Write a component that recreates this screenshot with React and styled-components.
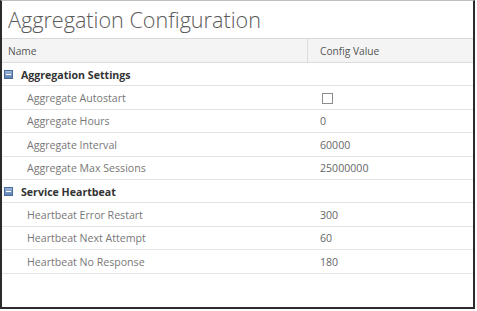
import React from 'react'
import styled, { createGlobalStyle } from 'styled-components'

const GlobalStyle = createGlobalStyle`
    html, body {
        margin: 0;
        padding: 0;
        background: #ffffff;
    }
    body {
        font-family: "Open Sans", "Liberation Sans", sans-serif;
    }
`;

const Frame = styled.div`
    box-sizing: border-box;
    width: 475px;
    height: 309px;
    border-left: 2px solid #2b2b2b;
    border-right: 2px solid #2b2b2b;
    border-bottom: 2px solid #2b2b2b;
    border-top: 1px solid #bdbdbd;
    background: #ffffff;
    display: flex;
    flex-direction: column;
`;

const Title = styled.h1`
    margin: 0;
    height: 38px;
    padding-left: 6px;
    padding-bottom: 1px;
    display: flex;
    align-items: center;
    font-size: 21.6px;
    font-weight: 300;
    color: #5a5a5a;
    border-bottom: 1px solid #d9d9d9;
    box-sizing: border-box;
`;

const Grid = styled.div`
    display: grid;
    grid-template-columns: 305px 1fr;
`;

const HeadCell = styled.div`
    box-sizing: border-box;
    height: 24px;
    display: flex;
    align-items: center;
    padding-left: ${p => p.$pad}px;
    background: #f4f4f4;
    border-bottom: 1px solid #dcdcdc;
    border-left: ${p => (p.$divider ? '1px solid #dcdcdc' : 'none')};
    font-size: 10.2px;
    color: #555555;
`;

const GroupRow = styled.div`
    grid-column: 1 / -1;
    box-sizing: border-box;
    height: 23.4px;
    display: flex;
    align-items: center;
    gap: 8px;
    padding-left: 2px;
    padding-top: 1px;
    border-bottom: 1px solid #e3e3e3;
    font-size: 10.6px;
    font-weight: 700;
    color: #333333;
`;

const Cell = styled.div`
    box-sizing: border-box;
    height: 23.4px;
    display: flex;
    align-items: center;
    padding-left: ${p => p.$pad}px;
    padding-top: 1px;
    border-bottom: 1px solid #e3e3e3;
    font-size: 10.6px;
    color: ${p => p.$color};
`;

const CheckBox = styled.span`
    display: inline-block;
    box-sizing: border-box;
    width: 11px;
    height: 11px;
    border: 1px solid #8c8c8c;
    background: #ffffff;
    margin-left: 2px;
`;

const CollapseIcon = () => (
    <svg width="9" height="9" viewBox="0 0 9 9">
        <defs>
            <linearGradient id="cg" x1="0" y1="0" x2="0" y2="1">
                <stop offset="0" stopColor="#9db6d8" />
                <stop offset="1" stopColor="#5d80b3" />
            </linearGradient>
        </defs>
        <rect x="0.5" y="0.5" width="8" height="8" fill="url(#cg)" stroke="#4a6a9a" />
        <rect x="2" y="4" width="5" height="1" fill="#ffffff" />
    </svg>
);

const groups = [
    {
        name: 'Aggregation Settings',
        rows: [
            { label: 'Aggregate Autostart', check: true },
            { label: 'Aggregate Hours', value: '0' },
            { label: 'Aggregate Interval', value: '60000' },
            { label: 'Aggregate Max Sessions', value: '25000000' },
        ],
    },
    {
        name: 'Service Heartbeat',
        rows: [
            { label: 'Heartbeat Error Restart', value: '300' },
            { label: 'Heartbeat Next Attempt', value: '60' },
            { label: 'Heartbeat No Response', value: '180' },
        ],
    },
];

const App = () => {
    return (
        <Frame>
            <GlobalStyle />
            <Title>Aggregation Configuration</Title>
            <Grid>
                <HeadCell $pad={6}>Name</HeadCell>
                <HeadCell $pad={12} $divider>Config Value</HeadCell>
                {groups.map(g => (
                    <React.Fragment key={g.name}>
                        <GroupRow>
                            <CollapseIcon />
                            {g.name}
                        </GroupRow>
                        {g.rows.map(r => (
                            <React.Fragment key={r.label}>
                                <Cell $pad={25} $color="#777777">{r.label}</Cell>
                                <Cell $pad={13} $color="#666666">
                                    {r.check ? <CheckBox /> : r.value}
                                </Cell>
                            </React.Fragment>
                        ))}
                    </React.Fragment>
                ))}
            </Grid>
        </Frame>
    );
};

export default App;
